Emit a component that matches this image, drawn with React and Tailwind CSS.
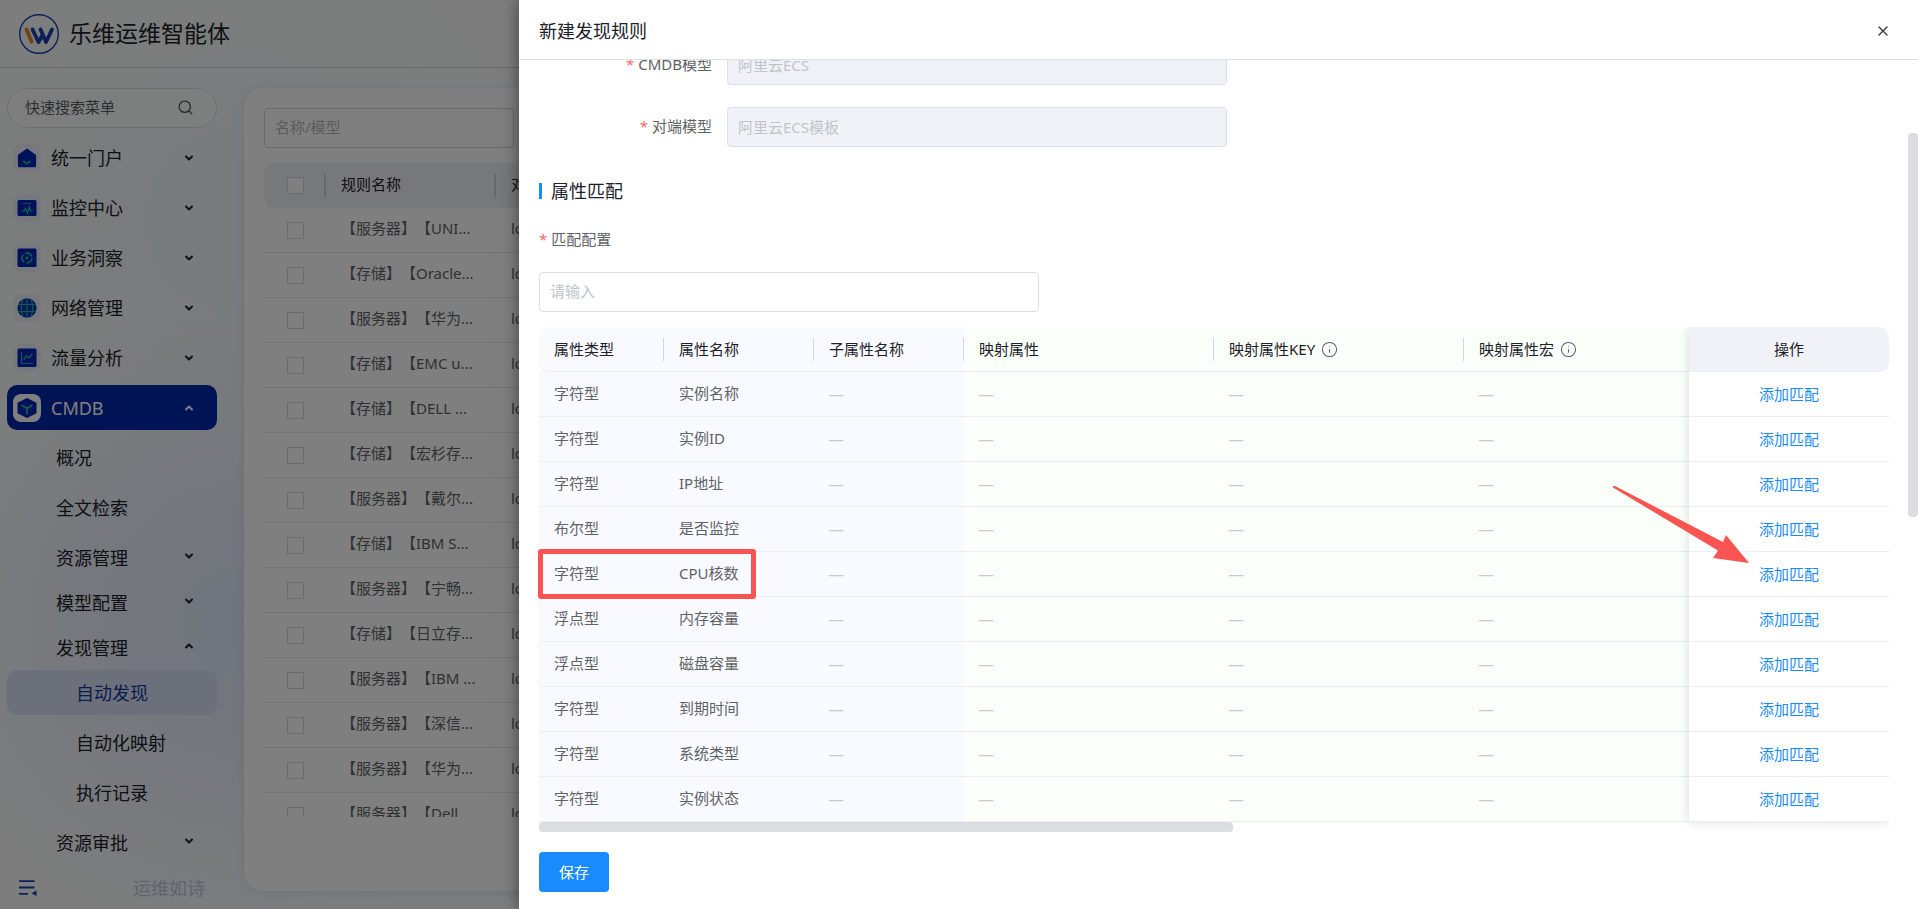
import React from 'react';
import { ChevronDown, ChevronUp, Search, X, Info } from 'lucide-react';

const DiscoverIcon = {
  home: (
    <svg viewBox="0 0 20 20" className="size-5">
      <path d="M10 0.500L18.500 6.500a1.500 1.500 0 0 1 .6 1.200V18a1.200 1.200 0 0 1-1.200 1.200H2.100A1.200 1.200 0 0 1 .9 18V7.700a1.500 1.500 0 0 1 .6-1.200z" fill="#0027b4" />
      <path d="M7 13.600q3 3 6 0" fill="none" stroke="#1fc8a0" strokeWidth="1.500" strokeLinecap="round" />
    </svg>
  ),
  monitor: (
    <svg viewBox="0 0 20 20" className="size-5">
      <rect x="0.500" y="2" width="19" height="16" rx="1.500" fill="#0027b4" />
      <path d="M6 5.500h8" stroke="#1f8fd0" strokeWidth="1.200" />
      <path d="M4.500 13h2.500l1.500-2.500 2 4.500 1.700-6 1.300 4h2" fill="none" stroke="#1fc8a0" strokeWidth="1.200" />
    </svg>
  ),
  insight: (
    <svg viewBox="0 0 20 20" className="size-5">
      <rect x="0.500" y="0.500" width="19" height="18.500" rx="1.500" fill="#0027b4" />
      <circle cx="10" cy="10" r="5" fill="none" stroke="#1fc8a0" strokeWidth="1.500" strokeDasharray="8 2.470" />
      <circle cx="10" cy="10" r="1.400" fill="#1fc8a0" />
    </svg>
  ),
  network: (
    <svg viewBox="0 0 20 20" className="size-5">
      <circle cx="10" cy="10" r="9.700" fill="#0a37a8" />
      <path d="M10 0.500v19M1 6.500h18M1 13.500h18M6 1.500Q2.500 10 6 18.500M14 1.500q3.500 8.500 0 17" fill="none" stroke="#1fb0b0" strokeWidth="1.100" />
    </svg>
  ),
  traffic: (
    <svg viewBox="0 0 20 20" className="size-5">
      <rect x="0.500" y="0.500" width="19" height="18.500" rx="1.500" fill="#0027b4" />
      <path d="M4.500 4v11.500H16" fill="none" stroke="#1fa8b8" strokeWidth="1.200" />
      <path d="M6.500 12l3-4 2.500 2 3.500-4" fill="none" stroke="#1fc8a0" strokeWidth="1.200" />
    </svg>
  ),
  cube: (
    <svg viewBox="0 0 20 20" className="size-5">
      <path d="M10 0L19.500 4.800V15.200L10 20 0.500 15.200V4.800z" fill="#0027b4" />
      <path d="M4.500 7.300L10 10.300l5.500-3M10 10.300v6" fill="none" stroke="#1fc87a" strokeWidth="1.700" />
    </svg>
  ),
};

const menus = [
  { label: '统一门户', icon: 'home' },
  { label: '监控中心', icon: 'monitor' },
  { label: '业务洞察', icon: 'insight' },
  { label: '网络管理', icon: 'network' },
  { label: '流量分析', icon: 'traffic' },
];

const rules = [
  '【服务器】【UNI...',
  '【存储】【Oracle...',
  '【服务器】【华为...',
  '【存储】【EMC u...',
  '【存储】【DELL ...',
  '【存储】【宏杉存...',
  '【服务器】【戴尔...',
  '【存储】【IBM S...',
  '【服务器】【宁畅...',
  '【存储】【日立存...',
  '【服务器】【IBM ...',
  '【服务器】【深信...',
  '【服务器】【华为...',
  '【服务器】【Dell ...',
];

const attributes = [
  { type: '字符型', name: '实例名称' },
  { type: '字符型', name: '实例ID' },
  { type: '字符型', name: 'IP地址' },
  { type: '布尔型', name: '是否监控' },
  { type: '字符型', name: 'CPU核数' },
  { type: '浮点型', name: '内存容量' },
  { type: '浮点型', name: '磁盘容量' },
  { type: '字符型', name: '到期时间' },
  { type: '字符型', name: '系统类型' },
  { type: '字符型', name: '实例状态' },
];

function Logo() {
  return (
    <svg viewBox="0 0 40 40" className="size-10 shrink-0">
      <circle cx="20" cy="20" r="19.300" fill="none" stroke="#1a3fb0" strokeWidth="1.400" />
      <g fill="none" strokeWidth="3.800" strokeLinecap="round" strokeLinejoin="round">
        <path d="M7.500 15.500L12.500 27.500" stroke="#e8802a" />
        <path d="M13.500 15.500L19.500 28L23 22M21.500 15.500L27 28L33 15.500" stroke="#1a3fb0" />
      </g>
    </svg>
  );
}

function MenuItem({ label, icon }) {
  return (
    <button type="button" className="mb-[5px] flex h-[45px] w-full items-center gap-2.5 pr-[22px] pl-1.5 text-left text-lg text-[#1d2129]">
      <span className="flex size-7 shrink-0 items-center justify-center rounded-lg bg-[#e8eafa]/60">
        {DiscoverIcon[icon]}
      </span>
      <span className="flex-1">{label}</span>
      <ChevronDown className="size-3" strokeWidth={4} />
    </button>
  );
}

function SubMenu({ label, open }) {
  const Icon = open ? ChevronUp : ChevronDown;
  return (
    <button type="button" className="flex h-[45px] w-full items-center pr-[22px] pl-[49px] text-left text-lg text-[#1d2129]">
      <span className="flex-1">{label}</span>
      <Icon className="mb-1 size-3" strokeWidth={4} />
    </button>
  );
}

function Sidebar() {
  return (
    <aside className="flex w-[243px] shrink-0 flex-col px-[7px] pt-5">
      <div className="mb-[7px] flex h-10 w-[210px] shrink-0 items-center rounded-full border border-[#dcdfe6] bg-white/60 pr-[22px] pl-[17px]">
        <input
          aria-label="快速搜索菜单"
          placeholder="快速搜索菜单"
          className="w-full min-w-0 flex-1 bg-transparent pb-0.5 text-[15px] outline-none placeholder:text-[#5a5e66]"
        />
        <Search className="mb-0.5 size-[17px] shrink-0 text-[#4e5156]" strokeWidth={1.8} />
      </div>
      <nav className="min-h-0 w-[210px] flex-1 overflow-hidden">
        {menus.map((m) => (
          <MenuItem key={m.label} label={m.label} icon={m.icon} />
        ))}
        <button type="button" className="mb-[5px] flex h-[45px] w-full items-center gap-2.5 rounded-[10px] bg-[#0027a8] pr-[22px] pl-1.5 text-left text-lg text-white">
          <span className="flex size-7 shrink-0 items-center justify-center rounded-lg bg-white">
            {DiscoverIcon.cube}
          </span>
          <span className="flex-1">CMDB</span>
          <ChevronUp className="size-3" strokeWidth={4} />
        </button>
        <a href="#overview" className="mb-[5px] flex h-[45px] items-center pl-[49px] text-lg text-[#1d2129]">概况</a>
        <a href="#search" className="mb-[5px] flex h-[45px] items-center pl-[49px] text-lg text-[#1d2129]">全文检索</a>
        <SubMenu label="资源管理" />
        <SubMenu label="模型配置" />
        <SubMenu label="发现管理" open />
        <a href="#discover" className="mb-[5px] flex h-[45px] items-center rounded-[10px] bg-[#d9e1f5] pl-[69px] text-lg text-[#123a9c]">自动发现</a>
        <a href="#mapping" className="mb-[5px] flex h-[45px] items-center pl-[69px] text-lg text-[#1d2129]">自动化映射</a>
        <a href="#records" className="mb-[5px] flex h-[45px] items-center pl-[69px] text-lg text-[#1d2129]">执行记录</a>
        <SubMenu label="资源审批" />
      </nav>
      <div className="flex h-[42px] w-[210px] shrink-0 items-center justify-between pr-3 pl-3">
        <button type="button" aria-label="收起菜单">
          <svg viewBox="0 0 18 16" className="h-4 w-[18px]">
            <path d="M0 1.200h15.500M0 7.500h15.500M0 13.800h9" stroke="#1440b0" strokeWidth="1.800" />
            <path d="M17.500 10.500v5.500l-5-2.700z" fill="#1440b0" />
          </svg>
        </button>
        <span className="text-lg text-[#bcc6e2]">运维如诗</span>
      </div>
    </aside>
  );
}

function RuleList() {
  return (
    <main className="mt-5 mb-[18px] ml-px min-w-0 flex-1 rounded-[20px] bg-white px-5 pt-5 shadow-[0_2px_10px_rgba(160,185,230,0.3)]">
      <input
        aria-label="名称/模型"
        placeholder="名称/模型"
        className="mb-[15px] block h-10 w-[250px] rounded border border-[#d0d3da] px-2.5 pb-0.5 text-[15px] outline-none placeholder:text-[#b4b6ba]"
      />
      <div className="h-[654px] overflow-hidden">
        <table className="w-full table-fixed border-separate border-spacing-0 text-left text-[15px] [text-spacing-trim:space-all]">
          <colgroup>
            <col className="w-[62px]" />
            <col className="w-[170px]" />
            <col />
          </colgroup>
          <thead>
            <tr className="h-[45px] text-[#1d2129]">
              <th className="rounded-l-[10px] bg-[#edf0f9] p-0 font-normal">
                <div className="flex h-[23px] items-center border-r-2 border-[#cdd1da] pl-[23px]">
                  <input type="checkbox" aria-label="全选" className="size-[17px] appearance-none border border-[#d5d8df] bg-white" />
                </div>
              </th>
              <th className="bg-[#edf0f9] p-0 font-normal">
                <div className="flex h-[23px] items-center border-r-2 border-[#cdd1da] pb-[3px] pl-[15px]">规则名称</div>
              </th>
              <th className="rounded-r-[10px] bg-[#edf0f9] pt-0 pr-0 pb-[3px] pl-[15px] font-normal">对端模型</th>
            </tr>
          </thead>
          <tbody>
            {rules.map((rule, i) => (
              <tr key={i} className="h-[45px] text-[#606266]">
                <td className="border-b border-[#e4e7ee] py-0 pr-0 pl-[23px]">
                  <input type="checkbox" aria-label={rule} className="block size-[17px] appearance-none border border-[#d5d8df] bg-white" />
                </td>
                <td className="border-b border-[#e4e7ee] pt-0 pr-0 pb-[3px] pl-[15px] whitespace-nowrap">{rule}</td>
                <td className="border-b border-[#e4e7ee] pt-0 pr-0 pb-[3px] pl-[15px]">local</td>
              </tr>
            ))}
          </tbody>
        </table>
      </div>
    </main>
  );
}

function ModelField({ id, label, value }) {
  return (
    <div className="mb-[22px] flex h-10 items-center">
      <label htmlFor={id} className="w-[188px] pr-[15px] pb-0.5 text-right text-[15px] text-[#606266]">
        <span className="mr-1 text-[#f56c6c]">*</span>
        {label}
      </label>
      <input
        id={id}
        value={value}
        disabled
        className="h-10 w-[500px] rounded border border-[#dcdfe6] bg-[#f1f2f8] px-2.5 pb-0.5 text-[15px] text-[#c0c4cc]"
      />
    </div>
  );
}

function HeadCell({ children, className }) {
  return (
    <th className={`border-b border-[#ebeef5] p-0 font-normal ${className}`}>
      <div className="flex h-[23px] items-center gap-1.5 border-r border-[#d3d6dd] pl-[15px]">{children}</div>
    </th>
  );
}

function DashCell({ className }) {
  return (
    <td className={`border-b pt-0 pr-0 pb-0.5 pl-[14px] font-['Noto_Sans_CJK_SC',sans-serif] text-lg leading-none text-[#c8cacf] ${className}`}>
      —
    </td>
  );
}

function AttributeTable() {
  return (
    <div className="relative overflow-hidden">
      <table className="w-full table-fixed border-separate border-spacing-0 text-left text-[15px]">
        <colgroup>
          <col className="w-[125px]" />
          <col className="w-[150px]" />
          <col className="w-[150px]" />
          <col className="w-[250px]" />
          <col className="w-[250px]" />
          <col />
          <col className="w-[200px]" />
        </colgroup>
        <thead>
          <tr className="h-[45px] text-[#1d2129]">
            <HeadCell className="rounded-l-[10px] bg-[#f9faff]">属性类型</HeadCell>
            <HeadCell className="bg-[#f9faff]">属性名称</HeadCell>
            <HeadCell className="bg-[#f9faff]">子属性名称</HeadCell>
            <HeadCell className="bg-[#fafffa]">映射属性</HeadCell>
            <HeadCell className="bg-[#fafffa]">
              映射属性KEY <Info className="size-[17px] text-[#606266]" strokeWidth={1.5} />
            </HeadCell>
            <th className="border-b border-[#ebeef5] bg-[#fafffa] p-0 font-normal">
              <div className="flex h-[23px] items-center gap-1.5 pl-[15px]">
                映射属性宏 <Info className="size-[17px] text-[#606266]" strokeWidth={1.5} />
              </div>
            </th>
            <th className="rounded-r-[10px] border-b border-[#ebeef5] bg-[#f1f2f8] p-0 text-center font-normal">操作</th>
          </tr>
        </thead>
        <tbody>
          {attributes.map((item) => (
            <tr key={item.name} className="h-[45px] text-[#606266]">
              <td className="border-b border-[#ebeef5] bg-[#f9faff] pt-0 pr-0 pb-0.5 pl-[15px]">{item.type}</td>
              <td className="border-b border-[#ebeef5] bg-[#f9faff] pt-0 pr-0 pb-0.5 pl-[15px]">{item.name}</td>
              <DashCell className="border-[#ebeef5] bg-[#f9faff]" />
              <DashCell className="border-[#ebeef0] bg-[#fafffa]" />
              <DashCell className="border-[#ebeef0] bg-[#fafffa]" />
              <DashCell className="border-[#ebeef0] bg-[#fafffa]" />
              <td className="border-b border-[#ebeef5] bg-white p-0 text-center">
                <button type="button" className="text-[#1a8bff]">添加匹配</button>
              </td>
            </tr>
          ))}
        </tbody>
      </table>
      <div className="h-2.5 w-[694px] rounded bg-[#dcdde0]" />
      {/* Shadow of the fixed action column */}
      <div className="pointer-events-none absolute top-0 right-0 bottom-2.5 w-[200px] shadow-[0_0_10px_rgba(0,0,0,0.14)]" />
    </div>
  );
}

function RuleDrawer() {
  return (
    <section className="relative ml-[519px] flex min-w-0 flex-1 flex-col bg-white shadow-[0_0_16px_rgba(0,0,0,0.5)]">
      <header className="flex h-[60px] shrink-0 items-center justify-between border-b border-[#dfe1e6] pt-0.5 pr-[27px] pl-5">
        <h2 className="text-lg text-[#1d2129]">新建发现规则</h2>
        <button type="button" aria-label="关闭">
          <X className="size-4 text-[#3c4048]" strokeWidth={2} />
        </button>
      </header>

      <div className="min-h-0 flex-1 overflow-hidden pr-[29px] pl-5">
        <div className="-mt-[15px]">
          <ModelField id="cmdb-model" label="CMDB模型" value="阿里云ECS" />
          <ModelField id="peer-model" label="对端模型" value="阿里云ECS模板" />
        </div>

        <div className="mt-[25px] flex h-9 items-center gap-[9px] pt-px">
          <span className="h-4 w-[3px] bg-[#1a8bff]" />
          <h3 className="text-lg text-[#1d2129]">属性匹配</h3>
        </div>
        <label htmlFor="match-config" className="mt-[11px] mb-[13px] flex h-10 items-center text-[15px] text-[#606266]">
          <span className="mr-1 text-[#f56c6c]">*</span>
          匹配配置
        </label>
        <input
          id="match-config"
          placeholder="请输入"
          className="mb-[15px] block h-10 w-[500px] rounded border border-[#dcdfe6] px-2.5 pb-0.5 text-[15px] outline-none placeholder:text-[#c0c4cc]"
        />

        <AttributeTable />

        <button type="button" className="mt-5 h-10 w-[70px] rounded bg-[#1a8bff] text-[15px] text-white">
          保存
        </button>
      </div>

      <div className="absolute top-[133px] right-0 h-[384px] w-2.5 rounded bg-[#dcdde0]" />
    </section>
  );
}

export default function App() {
  return (
    <div className="relative h-screen overflow-hidden bg-[#fafbfb] font-['Noto_Sans','Noto_Sans_CJK_SC',sans-serif]">
      <div className="flex h-full flex-col bg-[radial-gradient(circle_at_240px_620px,#dfe9f9_0,#ebf1fa_160px,transparent_320px),radial-gradient(circle_at_240px_220px,#f0f8fa_0,transparent_300px)]">
        <header className="flex h-[68px] shrink-0 items-center gap-2.5 border-b border-[#d2d5d6] px-[19px]">
          <Logo />
          <h1 className="text-[23px] text-[#1d2129]">乐维运维智能体</h1>
        </header>
        <div className="flex min-h-0 flex-1">
          <Sidebar />
          <RuleList />
        </div>
      </div>

      <div className="absolute inset-0 flex bg-black/50">
        <RuleDrawer />
      </div>

      {/* Marks for the row being explained */}
      <div className="pointer-events-none absolute top-[549px] left-[538px] h-[50px] w-[218px] rounded-[3px] border-5 border-[#fa5452]" />
      <svg viewBox="0 0 136 78" className="pointer-events-none absolute top-[486px] left-[1613px] h-[78px] w-[136px]">
        <path d="M0 0L2 0L110 56L113 49L136 77L100 72L105 64.500L0 1.500z" fill="#fa5452" />
      </svg>
    </div>
  );
}
